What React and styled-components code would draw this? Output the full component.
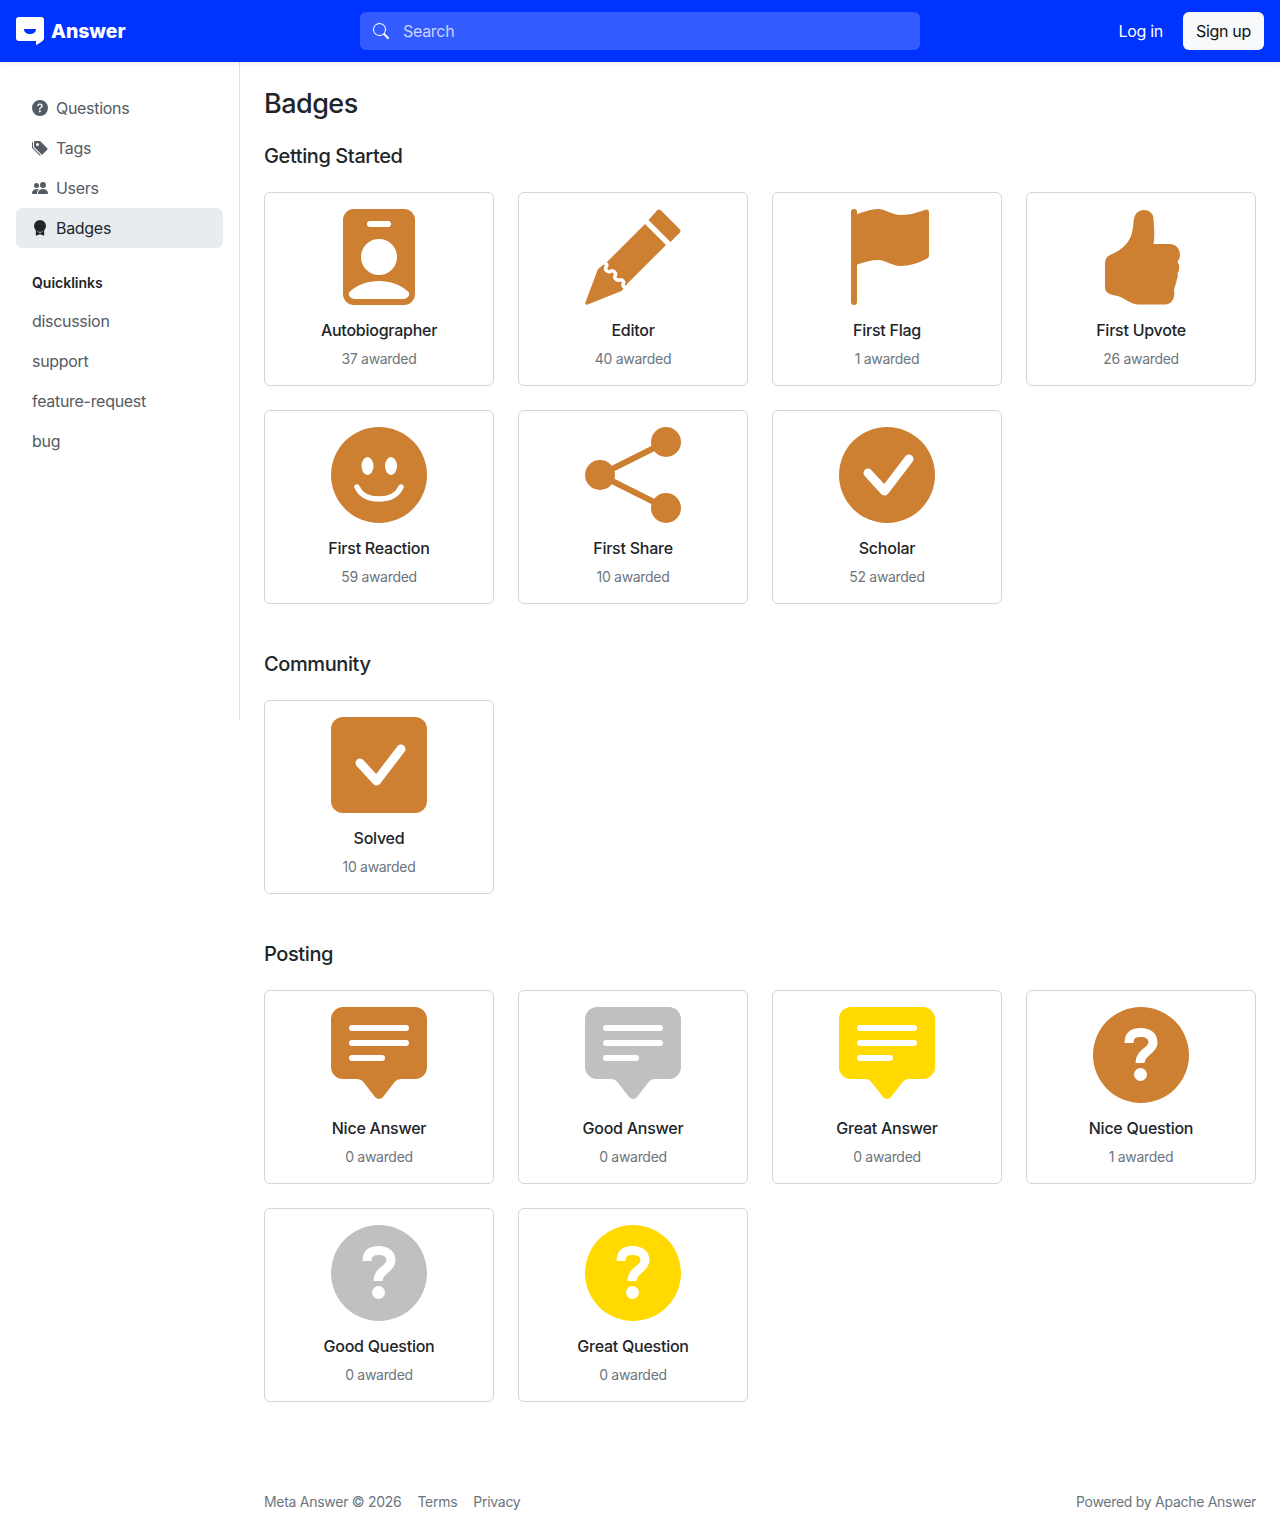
import React from "react";
import styled, { createGlobalStyle } from "styled-components";
import { BsQuestionCircleFill, BsTagsFill, BsPeopleFill, BsSearch } from "react-icons/bs";

const Global = createGlobalStyle`
  html, body { margin: 0; padding: 0; background: #fff; }
  body { font-family: Inter, "Liberation Sans", sans-serif; font-size: 16px; line-height: 24px; color: #212529; letter-spacing: -0.3px; }
  * { box-sizing: border-box; }
`;

const Header = styled.header`
  position: relative; z-index: 2;
  height: 62px; background: #0033ff; padding: 0 16px;
  display: grid; grid-template-columns: 344px 560px 1fr; align-items: center;
  box-shadow: 0 2px 4px rgba(0,0,0,.05);
`;
const Brand = styled.a`
  display: flex; align-items: center; gap: 7px; color: #fff;
  font-weight: 800; font-size: 19.4px; letter-spacing: 0;
`;
const SearchBox = styled.div`
  height: 38px; border-radius: 6px; background: rgba(255,255,255,.2);
  display: flex; align-items: center; gap: 14px; padding-left: 13px;
  color: rgba(255,255,255,.75); svg { color: #fff; }
`;
const Actions = styled.div`
  display: flex; justify-content: flex-end; align-items: center; gap: 20px;
`;
const Login = styled.a` color: #fff; `;
const Signup = styled.a`
  height: 38px; width: 81px; border-radius: 6px; background: #f8f9fa; color: #111;
  display: flex; align-items: center; justify-content: center;
`;
const Body = styled.div`
  display: grid; grid-template-columns: 240px 1fr; align-items: start;
`;
const Sidebar = styled.nav`
  height: 658px; border-right: 1px solid #dee2e6; padding: 26px 16px 0;
`;
const NavItem = styled.a`
  height: 40px; display: flex; align-items: center; gap: 8px; padding: 0 16px;
  border-radius: 6px; color: ${p => (p.$active ? "#212529" : "#545b62")};
  background: ${p => (p.$active ? "#e9ecef" : "transparent")};
`;
const QuickTitle = styled.div`
  font-size: 14px; font-weight: 600; line-height: 21px; padding: 0 16px; margin: 24px 0 8px; letter-spacing: 0;
`;
const Main = styled.main`
  padding: 24px 24px 0;
`;
const Title = styled.h3`
  margin: 0 0 24px; font-size: 27px; font-weight: 500; line-height: 36px; height: 34px; letter-spacing: -0.54px;
`;
const SectionTitle = styled.h5`
  margin: 0 0 24px; font-size: 20px; font-weight: 500; line-height: 24px; letter-spacing: -0.4px;
`;
const Grid = styled.div`
  display: grid; grid-template-columns: repeat(4, 230px); gap: 24px; margin-bottom: 48px;
`;
const Card = styled.div`
  height: 194px; border: 1px solid #d3d6d9; border-radius: 6px; padding: 16px;
  display: flex; flex-direction: column; align-items: center; background: #fff;
`;
const Name = styled.div`
  margin-top: 13px; line-height: 24px; font-weight: 450; letter-spacing: -0.25px;
`;
const Count = styled.div`
  margin-top: 6px; font-size: 14px; line-height: 21px; color: #6c757d;
`;
const Footer = styled.footer`
  margin-top: 90px; padding-bottom: 15px; display: flex; justify-content: space-between;
  font-size: 14px; line-height: 20px; color: #6c757d; letter-spacing: -0.28px;
`;
const FooterLeft = styled.div` display: flex; gap: 16px; `;

const Logo = () => (
  <svg width="28" height="28" viewBox="0 0 28 28">
    <path d="M3 0H25A3 3 0 0 1 28 3V21Q28 23 26.500 24L21 27.800Q20 28.300 20 27V24H3A3 3 0 0 1 0 21V3A3 3 0 0 1 3 0Z" fill="#fff" />
    <path d="M8 12H20C20 15.500 17.500 17 14 17S8 15.500 8 12Z" fill="#0033ff" />
  </svg>
);
const AwardIcon = () => (
  <svg width="16" height="16" viewBox="0 0 16 16" fill="#212529">
    <circle cx="8" cy="6" r="6" />
    <path d="M3.800 10.500L3.800 15.800L8 14.200L12.200 15.800L12.200 10.500L8 13Z" />
  </svg>
);

const Svg = ({ children }) => <svg width="96" height="96" viewBox="0 0 96 96" style={{ flex: "none" }}>{children}</svg>;
const BRONZE = "#cd7f32", SILVER = "#c0c0c0", GOLD = "#ffd900";
const CHECK = "M29 46L45.500 64L70 32";

const icons = {
  id: c => (
    <Svg>
      <rect x="12" width="72" height="96" rx="11" fill={c} />
      <rect x="36" y="12" width="24" height="6" rx="3" fill="#fff" />
      <circle cx="48" cy="48" r="18" fill="#fff" />
      <path d="M24 90H72C77 90 80 85 77 82.500C70 76 59 72 48 72C37 72 26 76 19 82.500C16 85 19 90 24 90Z" fill="#fff" />
    </Svg>
  ),
  pencil: c => (
    <Svg>
      <path d="M72 1.500Q74 -.5 76 1.500L94.500 20Q96.500 22 94.500 24L85.500 33L63.500 11Z" fill={c} />
      <path d="M60 15L81 36L43 74L36.500 82L2 95.800Q0 96 .2 94L13 60L22 53Z" fill={c} />
      <path d="M16 52C21 54 23 56 21 58C19 61 24 64 26 62C28 61 32 64 30 67C29 69 32 72 35 71C37 70 40 73 38 75C37 77 41 80 45 80" fill="none" stroke="#fff" strokeWidth="3.500" />
    </Svg>
  ),
  flag: c => (
    <Svg>
      <rect x="12" width="6" height="96" rx="3" fill={c} />
      <path d="M17 5.500C25 3 32 0 39 0C47 0 52 6 62 6C72 6 80 3 87 .5Q90 0 90 3V46Q90 49 87 50C80 54 70 57 62 57C52 57 47 51 39 51C32 51 25 53 17 56Z" fill={c} />
    </Svg>
  ),
  thumb: c => (
    <Svg>
      <path d="M51 1C57 1 60.500 5 60.500 10C61 18 62 26 60.500 35H77C83 35 87 40 87 46C87 49 85.500 51 84.500 53C86 55 86.500 57 86 60C86 62 85 63 84.500 64C85 66 85 68 84 70C83.500 73 82 77 81 81C82.500 89 79 95.500 72 95.500H46C36 95.500 32 88 22 86.500C15 85 12 83 12 78V55C12 50 14 47 18 45.500C30 41 37 32 39 24C41 15 40 12 41.500 8C43 3 47 1 51 1Z" fill={c} />
    </Svg>
  ),
  smile: c => (
    <Svg>
      <circle cx="48" cy="48" r="48" fill={c} />
      <ellipse cx="36.500" cy="39" rx="6" ry="9" fill="#fff" />
      <ellipse cx="60" cy="39" rx="6" ry="9" fill="#fff" />
      <path d="M26 60C30 69 38 72 48 72C58 72 66 69 70 60" fill="none" stroke="#fff" strokeWidth="5.500" strokeLinecap="round" />
    </Svg>
  ),
  share: c => (
    <Svg>
      <path d="M81 15L15 48L81 81" fill="none" stroke={c} strokeWidth="6" />
      <circle cx="81" cy="15" r="15" fill={c} />
      <circle cx="15" cy="48" r="15" fill={c} />
      <circle cx="81" cy="81" r="15" fill={c} />
    </Svg>
  ),
  scholar: c => (
    <Svg>
      <circle cx="48" cy="48" r="48" fill={c} />
      <path d={CHECK} fill="none" stroke="#fff" strokeWidth="9" strokeLinecap="round" strokeLinejoin="round" />
    </Svg>
  ),
  solved: c => (
    <Svg>
      <rect width="96" height="96" rx="12" fill={c} />
      <path d={CHECK} fill="none" stroke="#fff" strokeWidth="9" strokeLinecap="round" strokeLinejoin="round" />
    </Svg>
  ),
  answer: c => (
    <Svg>
      <path d="M12 0H84A12 12 0 0 1 96 12V60A12 12 0 0 1 84 72H70Q66 72 64 74.500L52 90Q48 94 44 90L32 74.500Q30 72 26 72H12A12 12 0 0 1 0 60V12A12 12 0 0 1 12 0Z" fill={c} />
      <rect x="18" y="18" width="60" height="6" rx="3" fill="#fff" />
      <rect x="18" y="33" width="60" height="6" rx="3" fill="#fff" />
      <rect x="18" y="48" width="36" height="6" rx="3" fill="#fff" />
    </Svg>
  ),
  question: c => (
    <Svg>
      <circle cx="48" cy="48" r="48" fill={c} />
      <path d="M36 36C36 28 41 25.500 48 25.500C55 25.500 60 29 60 35.500C60 44 47 45 47 56" fill="none" stroke="#fff" strokeWidth="9" />
      <circle cx="47.500" cy="67.500" r="6.500" fill="#fff" />
    </Svg>
  ),
};

const sections = [
  ["Getting Started", [
    ["Autobiographer", "37 awarded", "id", BRONZE],
    ["Editor", "40 awarded", "pencil", BRONZE],
    ["First Flag", "1 awarded", "flag", BRONZE],
    ["First Upvote", "26 awarded", "thumb", BRONZE],
    ["First Reaction", "59 awarded", "smile", BRONZE],
    ["First Share", "10 awarded", "share", BRONZE],
    ["Scholar", "52 awarded", "scholar", BRONZE],
  ]],
  ["Community", [["Solved", "10 awarded", "solved", BRONZE]]],
  ["Posting", [
    ["Nice Answer", "0 awarded", "answer", BRONZE],
    ["Good Answer", "0 awarded", "answer", SILVER],
    ["Great Answer", "0 awarded", "answer", GOLD],
    ["Nice Question", "1 awarded", "question", BRONZE],
    ["Good Question", "0 awarded", "question", SILVER],
    ["Great Question", "0 awarded", "question", GOLD],
  ]],
];

export default function App() {
  return (
    <>
      <Global />
      <Header>
        <Brand><Logo />Answer</Brand>
        <SearchBox><BsSearch size={16} />Search</SearchBox>
        <Actions><Login>Log in</Login><Signup>Sign up</Signup></Actions>
      </Header>
      <Body>
        <Sidebar>
          <NavItem><BsQuestionCircleFill size={16} />Questions</NavItem>
          <NavItem><BsTagsFill size={16} />Tags</NavItem>
          <NavItem><BsPeopleFill size={16} />Users</NavItem>
          <NavItem $active><AwardIcon />Badges</NavItem>
          <QuickTitle>Quicklinks</QuickTitle>
          {["discussion", "support", "feature-request", "bug"].map(t => <NavItem key={t}>{t}</NavItem>)}
        </Sidebar>
        <Main>
          <Title>Badges</Title>
          {sections.map(([title, items]) => (
            <React.Fragment key={title}>
              <SectionTitle>{title}</SectionTitle>
              <Grid>
                {items.map(([name, count, icon, color]) => (
                  <Card key={name}>
                    {icons[icon](color)}
                    <Name>{name}</Name>
                    <Count>{count}</Count>
                  </Card>
                ))}
              </Grid>
            </React.Fragment>
          ))}
          <Footer>
            <FooterLeft><span>Meta Answer © 2026</span><span>Terms</span><span>Privacy</span></FooterLeft>
            <span>Powered by Apache Answer</span>
          </Footer>
        </Main>
      </Body>
    </>
  );
}
